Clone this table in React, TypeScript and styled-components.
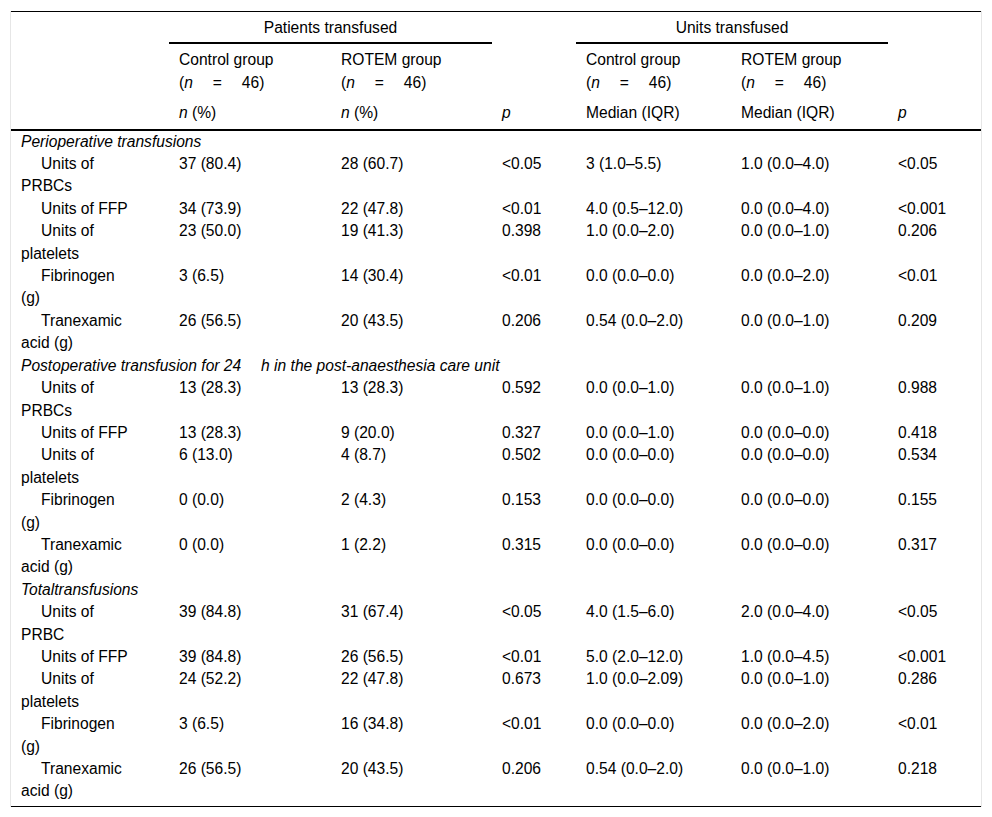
import React from "react";
import styled, { createGlobalStyle } from "styled-components";

const GlobalStyle = createGlobalStyle`
  html, body {
    margin: 0;
    padding: 0;
    background: #ffffff;
  }
  body {
    font-family: "Liberation Sans", Arial, Helvetica, sans-serif;
    color: #000000;
  }
`;

const Page = styled.div`
  padding: 11px 0 0 10px;
`;

const Frame = styled.div`
  width: 970px;
  border-left: 1px solid #e6e6e6;
  border-right: 1px solid #e6e6e6;
`;

const Table = styled.table`
  width: 970px;
  table-layout: fixed;
  border-collapse: collapse;
  font-size: 15.6px;
  line-height: 22.4px;
  border-top: 1px solid #000;
  border-bottom: 1px solid #000;
`;

const HeadRow = styled.tr<{ $last?: boolean }>`
  ${(p) => (p.$last ? "border-bottom: 2px solid #000;" : "")}
`;

const HeadCell = styled.th<{ $group?: boolean; $bottomPad?: number }>`
  font-weight: normal;
  text-align: ${(p) => (p.$group ? "center" : "left")};
  vertical-align: top;
  padding: 5px 10px ${(p) => p.$bottomPad ?? 3}px;
  ${(p) => (p.$group ? "border-bottom: 2px solid #000;" : "")}
`;

const Ital = styled.i`
  font-style: italic;
`;

const NoWrap = styled.span`
  white-space: nowrap;
`;

const SectionCell = styled.td`
  font-style: italic;
  padding: 0 10px;
  vertical-align: top;
`;

const LabelCell = styled.td<{ $end?: boolean }>`
  padding: 0 37px ${(p) => (p.$end ? "3px" : "0")} 10px;
  text-indent: 20px;
  vertical-align: top;
`;

const Cell = styled.td<{ $end?: boolean }>`
  padding: 0 10px ${(p) => (p.$end ? "3px" : "0")};
  vertical-align: top;
`;

type Row = [string, string, string, string, string, string, string];

interface Section {
  title: string;
  rows: Row[];
}

const sections: Section[] = [
  {
    title: "Perioperative transfusions",
    rows: [
      ["Units of PRBCs", "37 (80.4)", "28 (60.7)", "<0.05", "3 (1.0–5.5)", "1.0 (0.0–4.0)", "<0.05"],
      ["Units of FFP", "34 (73.9)", "22 (47.8)", "<0.01", "4.0 (0.5–12.0)", "0.0 (0.0–4.0)", "<0.001"],
      ["Units of platelets", "23 (50.0)", "19 (41.3)", "0.398", "1.0 (0.0–2.0)", "0.0 (0.0–1.0)", "0.206"],
      ["Fibrinogen (g)", "3 (6.5)", "14 (30.4)", "<0.01", "0.0 (0.0–0.0)", "0.0 (0.0–2.0)", "<0.01"],
      ["Tranexamic acid (g)", "26 (56.5)", "20 (43.5)", "0.206", "0.54 (0.0–2.0)", "0.0 (0.0–1.0)", "0.209"],
    ],
  },
  {
    title: "Postoperative transfusion for 24 \u2003h in the post-anaesthesia care unit",
    rows: [
      ["Units of PRBCs", "13 (28.3)", "13 (28.3)", "0.592", "0.0 (0.0–1.0)", "0.0 (0.0–1.0)", "0.988"],
      ["Units of FFP", "13 (28.3)", "9 (20.0)", "0.327", "0.0 (0.0–1.0)", "0.0 (0.0–0.0)", "0.418"],
      ["Units of platelets", "6 (13.0)", "4 (8.7)", "0.502", "0.0 (0.0–0.0)", "0.0 (0.0–0.0)", "0.534"],
      ["Fibrinogen (g)", "0 (0.0)", "2 (4.3)", "0.153", "0.0 (0.0–0.0)", "0.0 (0.0–0.0)", "0.155"],
      ["Tranexamic acid (g)", "0 (0.0)", "1 (2.2)", "0.315", "0.0 (0.0–0.0)", "0.0 (0.0–0.0)", "0.317"],
    ],
  },
  {
    title: "Totaltransfusions",
    rows: [
      ["Units of PRBC", "39 (84.8)", "31 (67.4)", "<0.05", "4.0 (1.5–6.0)", "2.0 (0.0–4.0)", "<0.05"],
      ["Units of FFP", "39 (84.8)", "26 (56.5)", "<0.01", "5.0 (2.0–12.0)", "1.0 (0.0–4.5)", "<0.001"],
      ["Units of platelets", "24 (52.2)", "22 (47.8)", "0.673", "1.0 (0.0–2.09)", "0.0 (0.0–1.0)", "0.286"],
      ["Fibrinogen (g)", "3 (6.5)", "16 (34.8)", "<0.01", "0.0 (0.0–0.0)", "0.0 (0.0–2.0)", "<0.01"],
      ["Tranexamic acid (g)", "26 (56.5)", "20 (43.5)", "0.206", "0.54 (0.0–2.0)", "0.0 (0.0–1.0)", "0.218"],
    ],
  },
];

const colWidths = [158, 162, 161, 84, 155, 157, 93];

const GroupLabel: React.FC<{ name: string }> = ({ name }) => (
  <>
    {name}
    <br />
    <NoWrap>
      (<Ital>n</Ital>
      {" \u2003=\u2003 46)"}
    </NoWrap>
  </>
);

export default function App() {
  return (
    <>
      <GlobalStyle />
      <Page>
        <Frame>
          <Table>
            <colgroup>
              {colWidths.map((w, i) => (
                <col key={i} style={{ width: w }} />
              ))}
            </colgroup>
            <thead>
              <HeadRow>
                <HeadCell />
                <HeadCell colSpan={2} $group>
                  Patients transfused
                </HeadCell>
                <HeadCell />
                <HeadCell colSpan={2} $group>
                  Units transfused
                </HeadCell>
                <HeadCell />
              </HeadRow>
              <HeadRow>
                <HeadCell />
                <HeadCell>
                  <GroupLabel name="Control group" />
                </HeadCell>
                <HeadCell>
                  <GroupLabel name="ROTEM group" />
                </HeadCell>
                <HeadCell />
                <HeadCell>
                  <GroupLabel name="Control group" />
                </HeadCell>
                <HeadCell>
                  <GroupLabel name="ROTEM group" />
                </HeadCell>
                <HeadCell />
              </HeadRow>
              <HeadRow $last>
                <HeadCell $bottomPad={4} />
                <HeadCell $bottomPad={4}>
                  <Ital>n</Ital> (%)
                </HeadCell>
                <HeadCell $bottomPad={4}>
                  <Ital>n</Ital> (%)
                </HeadCell>
                <HeadCell $bottomPad={4}>
                  <Ital>p</Ital>
                </HeadCell>
                <HeadCell $bottomPad={4}>Median (IQR)</HeadCell>
                <HeadCell $bottomPad={4}>Median (IQR)</HeadCell>
                <HeadCell $bottomPad={4}>
                  <Ital>p</Ital>
                </HeadCell>
              </HeadRow>
            </thead>
            <tbody>
              {sections.map((s, si) => (
                <React.Fragment key={si}>
                  <tr>
                    <SectionCell colSpan={7}>{s.title}</SectionCell>
                  </tr>
                  {s.rows.map((r, ri) => {
                    const end = si === sections.length - 1 && ri === s.rows.length - 1;
                    return (
                      <tr key={ri}>
                        <LabelCell $end={end}>{r[0]}</LabelCell>
                        {r.slice(1).map((v, ci) => (
                          <Cell key={ci} $end={end}>
                            {v}
                          </Cell>
                        ))}
                      </tr>
                    );
                  })}
                </React.Fragment>
              ))}
            </tbody>
          </Table>
        </Frame>
      </Page>
    </>
  );
}
